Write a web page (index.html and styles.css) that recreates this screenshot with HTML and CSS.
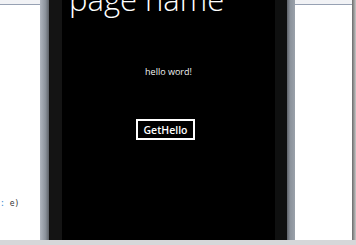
FILE: index.html
```html
<!DOCTYPE html>
<html lang="en">
<head>
  <meta charset="UTF-8" />
  <title>page name</title>
  <link rel="stylesheet" href="styles.css">
</head>
<body>
  <div class="stage">
    <div class="pane pane-left">
      <div class="pane-top"></div>
      <div class="code-line"><span class="kw">:</span> e)</div>
    </div>
    <div class="bezel bezel-left"></div>
    <div class="screen">
      <h1 class="title">page name</h1>
      <p class="hello">hello word!</p>
      <button class="get-hello">GetHello</button>
    </div>
    <div class="bezel bezel-right"></div>
    <div class="pane pane-right">
      <div class="pane-top"></div>
    </div>
    <div class="shadow"></div>
  </div>
</body>
</html>
```

FILE: styles.css
```css
body {
  margin: 0;
  width: 356px;
  height: 245px;
  overflow: hidden;
  background: #d6d7d9;
  font-family: 'Open Sans', 'Noto Sans', sans-serif;
}

.stage {
  display: flex;
  height: 240px;
}

.pane {
  background: #fff;
  display: flex;
  flex-direction: column;
}

.pane-top {
  height: 4px;
  background: #f1f2f5;
  border-bottom: 1px solid #97a1b3;
}

.pane-left {
  width: 40px;
}

.pane-right {
  width: 57px;
}

.code-line {
  margin-top: 194px;
  font-family: 'DejaVu Sans Mono', monospace;
  font-size: 8px;
  color: #333;
}

.kw {
  color: #3b8bd0;
}

.bezel-left {
  width: 9px;
  background: linear-gradient(to right, #b0b6bf, #8c939c 60%, #5d6268);
}

.bezel-right {
  width: 8px;
  background: linear-gradient(to right, #5d6269, #8b929b 40%, #9aa1aa);
}

.shadow {
  width: 4px;
  background: linear-gradient(to right, #6a6a6a, #c8c8c8);
}

.screen {
  flex: 1;
  background: #000;
  border-left: 13px solid #141414;
  border-right: 12px solid #0f1010;
  display: flex;
  flex-direction: column;
  align-items: center;
  color: #fff;
}

.title {
  align-self: flex-start;
  margin: -19px 0 0 7px;
  font-size: 31px;
  font-weight: 300;
  line-height: 36px;
  white-space: nowrap;
}

.hello {
  margin: 49px 0 0 0;
  font-size: 9px;
  line-height: 12px;
  color: #f2f2f2;
}

.get-hello {
  margin-top: 41px;
  margin-right: 6px;
  width: 59px;
  height: 21px;
  padding: 0;
  background: #000;
  border: 2px solid #fff;
  color: #fff;
  font-family: 'Open Sans', sans-serif;
  font-size: 10.5px;
  font-weight: 600;
}
```
